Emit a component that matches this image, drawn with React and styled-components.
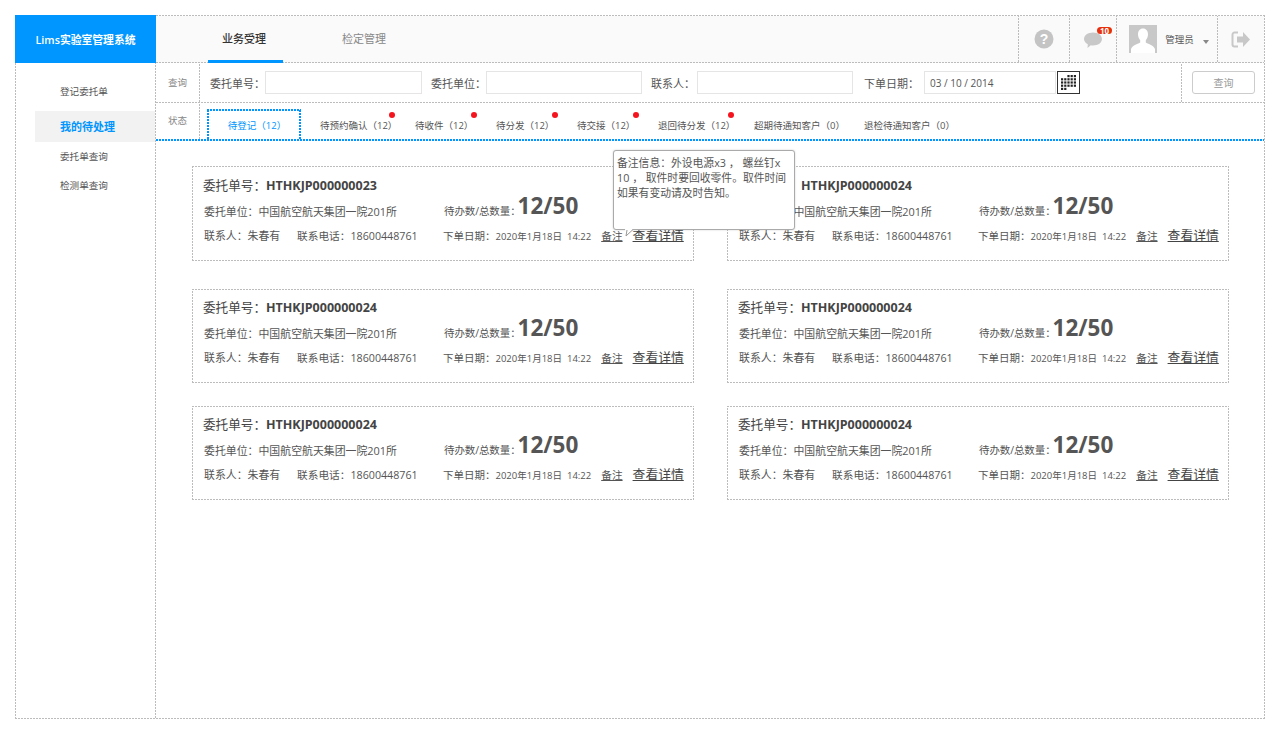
import React from "react";
import styled, { createGlobalStyle, css } from "styled-components";

const Global = createGlobalStyle`
  html, body { margin: 0; padding: 0; background: #fff; }
  * { box-sizing: border-box; }
  body { font-family: "Open Sans", "Noto Sans CJK SC", sans-serif; color: #555; }
`;
const GRAY = "#bcbcbc";
const BLUE = "#0096ff";

/* Fine 2-on 1-off dashes, finer than the browser's own dashed border. */
const dashes = (sides, color = GRAY, w = 1) => {
  const h = `repeating-linear-gradient(90deg, ${color} 0 2px, transparent 2px 3px)`;
  const v = `repeating-linear-gradient(0deg, ${color} 0 2px, transparent 2px 3px)`;
  const layers = {
    top: `${h} left top / 100% ${w}px no-repeat border-box`,
    bottom: `${h} left bottom / 100% ${w}px no-repeat border-box`,
    left: `${v} left top / ${w}px 100% no-repeat border-box`,
    right: `${v} right top / ${w}px 100% no-repeat border-box`,
  };
  return css`
    border: 0 solid transparent;
    ${sides.map(s => `border-${s}-width: ${w}px;`).join(" ")}
    background-image: none;
    background: ${sides.map(s => layers[s]).join(", ")};
  `;
};

const Frame = styled.div`
  position: relative;
  margin: 15px 0 0 15px;
  width: 1250px;
  height: 704px;
  ${dashes(["top", "right", "bottom", "left"])}
  display: grid;
  grid-template-columns: 140px 1fr;
  grid-template-rows: 47px 1fr;
`;
const Logo = styled.div`
  background: ${BLUE};
  color: #fff;
  font-size: 10.8px;
  font-weight: 600;
  display: flex;
  align-items: center;
  justify-content: center;
  margin: -1px 0 0 -1px;
  width: 141px;
  height: 48px;
`;
const Header = styled.header`
  ${dashes(["bottom"])}
  background-color: #fafafa;
  display: flex;
  align-items: stretch;
`;
const NavTab = styled.div`
  width: 75px;
  margin-left: ${p => p.$ml}px;
  font-size: 11px;
  color: ${p => (p.$active ? "#333" : "#888")};
  font-weight: ${p => (p.$active ? 500 : 400)};
  display: flex;
  align-items: center;
  justify-content: center;
  border-bottom: 3px solid ${p => (p.$active ? BLUE : "transparent")};
  margin-bottom: -1px;
  padding-right: 3px;
`;
const HeaderRight = styled.div`
  margin-left: auto;
  display: flex;
`;
const HeadCell = styled.div`
  position: relative;
  width: ${p => p.$w}px;
  ${dashes(["left"])}
  display: flex;
  align-items: center;
  justify-content: center;
  padding-left: ${p => p.$pl || 0}px;
`;
const Badge = styled.span`
  position: absolute;
  top: 11px;
  left: 27px;
  width: 15px;
  height: 7px;
  border-radius: 4px;
  background: #e8300c;
  color: #fff;
  font-size: 8px;
  font-weight: 700;
  line-height: 7px;
  text-align: center;
`;
const UserName = styled.span`
  font-size: 9.5px;
  color: #555;
  margin: 0 9px 0 8px;
`;
const Caret = styled.span`
  width: 0;
  height: 0;
  border-left: 3.5px solid transparent;
  border-right: 3.5px solid transparent;
  border-top: 4px solid #888;
  margin-top: 6px;
`;
const Sidebar = styled.nav`
  ${dashes(["right"])}
  padding-top: 18px;
  display: flex;
  flex-direction: column;
  align-items: flex-end;
`;
const SideItem = styled.div`
  width: 120px;
  height: ${p => p.$h}px;
  padding-left: 25px;
  padding-bottom: ${p => (p.$active ? 2 : 0)}px;
  font-size: ${p => (p.$active ? "11px" : "9.6px")};
  font-weight: ${p => (p.$active ? 700 : 400)};
  color: ${p => (p.$active ? BLUE : "#555")};
  background: ${p => (p.$active ? "#f2f2f2" : "transparent")};
  display: flex;
  align-items: center;
  margin-top: ${p => p.$mt || 0}px;
`;
const Main = styled.main`
  position: relative;
  display: flex;
  flex-direction: column;
`;
const QueryRow = styled.div`
  height: 40px;
  ${dashes(["bottom"])}
  display: flex;
  align-items: stretch;
`;
const RowLabel = styled.div`
  width: 44px;
  flex: none;
  ${dashes(["right"])}
  font-size: 9.5px;
  color: #888;
  display: flex;
  align-items: center;
  justify-content: center;
  padding-bottom: ${p => p.$pb || 0}px;
`;
const Fields = styled.div`
  flex: 1;
  display: flex;
  align-items: center;
  padding-left: 10px;
`;
const FieldLabel = styled.span`
  font-size: 11px;
  color: #555;
  width: ${p => p.$w}px;
  flex: none;
  white-space: nowrap;
`;
const Input = styled.div`
  width: ${p => p.$w}px;
  height: 23px;
  flex: none;
  border: 1px solid #e5e5e5;
  background: #fff;
  margin-right: ${p => p.$mr || 0}px;
  font-size: 10px;
  color: #555;
  padding-left: 5px;
  display: flex;
  align-items: center;
`;
const Calendar = styled.div`
  width: 23px;
  height: 23px;
  flex: none;
  border: 1px solid #333;
  margin-left: 1px;
  display: flex;
  align-items: center;
  justify-content: center;
  background: #fff;
`;
const QueryCell = styled.div`
  width: 83px;
  flex: none;
  ${dashes(["left"])}
  display: flex;
  align-items: center;
  padding-left: 10px;
`;
const QueryBtn = styled.div`
  width: 63px;
  height: 23px;
  border: 1px solid #ccc;
  border-radius: 3px;
  font-size: 10px;
  color: #999;
  display: flex;
  align-items: center;
  justify-content: center;
`;
const StatusRow = styled.div`
  height: 38px;
  ${dashes(["bottom"], BLUE, 2)}
  display: flex;
  align-items: stretch;
`;
const Tabs = styled.div`
  flex: 1;
  display: flex;
  padding-left: 7px;
`;
const Tab = styled.div`
  position: relative;
  width: ${p => p.$w}px;
  flex: none;
  margin-top: 6px;
  font-size: 9.5px;
  white-space: nowrap;
  color: ${p => (p.$active ? BLUE : "#555")};
  ${p => (p.$active ? dashes(["top", "left", "right"], BLUE, 2) : "border: 1px solid transparent; border-bottom: 0;")}
  display: flex;
  align-items: center;
  justify-content: ${p => (p.$active ? "center" : "flex-start")};
  padding-left: ${p => (p.$active ? 6 : p.$pl || 0)}px;
`;
const Dot = styled.i`
  position: absolute;
  top: 2px;
  left: ${p => p.$l}px;
  width: 6px;
  height: 6px;
  border-radius: 50%;
  background: #f5141e;
`;
const Cards = styled.section`
  padding: 25px 0 0 36px;
  display: grid;
  grid-template-columns: 502px 502px;
  grid-template-rows: 100px 94px 94px;
  column-gap: 33px;
  row-gap: 23px;
`;
const Card = styled.article`
  height: ${p => (p.$first ? 95 : 94)}px;
  ${dashes(["top", "right", "bottom", "left"])}
  padding: ${p => (p.$first ? 10 : 9)}px 9px 0 10px;
  display: flex;
  flex-direction: column;
`;
const Title = styled.div`
  font-size: 12.6px;
  color: #444;
  height: 18px;
  line-height: 18px;
  white-space: nowrap;
  b { font-size: 12.5px; font-weight: 700; color: #444; }
`;
const Line = styled.div`
  display: flex;
  align-items: center;
  font-size: 10.7px;
  color: #555;
  white-space: nowrap;
  padding-left: ${p => p.$pl || 0}px;
`;
const StatLine = styled(Line)`
  height: 30px;
`;
const InfoLine = styled(Line)`
  height: 18px;
  margin-top: 1px;
`;
const CellW = styled.span`
  width: ${p => p.$w}px;
  flex: none;
  display: flex;
  align-items: center;
  padding-top: ${p => p.$pt || 0}px;
`;
const Contact = styled(CellW)`
  font-size: 10.9px;
`;
const Unit = styled(CellW)`
  font-size: 10.9px;
`;
const StatLabel = styled.span`
  font-size: 10.5px;
  letter-spacing: -0.1px;
`;
const Big = styled.strong`
  font-size: 22.5px;
  font-weight: 700;
  color: #555;
  margin-left: -3px;
  position: relative;
  top: -4px;
  line-height: 1;
`;
const Small = styled.span`
  font-size: 9.5px;
`;
const OrderDate = styled.span`
  font-size: 10.5px;
`;
const Note = styled.span`
  text-decoration: underline;
  margin-left: 10px;
`;
const More = styled.span`
  font-size: 12.8px;
  text-decoration: underline;
  color: #444;
  margin-left: 10px;
  position: relative;
  top: -1px;
`;
const Tooltip = styled.div`
  position: absolute;
  left: 457px;
  top: 87px;
  width: 182px;
  height: 80px;
  background: #fff;
  border: 1px solid #aaa;
  border-radius: 3px;
  box-shadow: 0 0 2px rgba(0,0,0,.2);
  padding: 4px 3px;
  font-size: 10.8px;
  line-height: 15px;
  color: #555;
  z-index: 5;
  white-space: nowrap;
`;
const Tail = styled.svg`
  position: absolute;
  left: 11px;
  top: 78px;
`;

const HelpIcon = () => (
  <svg width="20" height="20" viewBox="0 0 20 20" aria-hidden>
    <circle cx="10" cy="10" r="9.5" fill="#c4c4c4" />
    <text x="10" y="15" textAnchor="middle" fontSize="14" fontWeight="700" fill="#fff" fontFamily="Liberation Sans">?</text>
  </svg>
);
const ChatIcon = () => (
  <svg width="20" height="18" viewBox="0 0 20 18" aria-hidden style={{ marginTop: 2 }}>
    <path d="M10 1.5c5 0 9 2.8 9 6.500s-4 6.500-9 6.500c-.8 0-1.400 0-2.200-.2L4.500 17l.3-3.800C2.500 12 1 10.200 1 8c0-3.700 4-6.500 9-6.500z" fill="#c8c8c8" />
  </svg>
);
const Avatar = () => (
  <svg width="28" height="28" viewBox="0 0 28 28" aria-hidden>
    <rect width="28" height="28" fill="#c8c8c8" />
    <path d="M14 3.500c3.200 0 5 2.500 5 5.800 0 2.500-1 4.700-2.200 6v2.200c1.500 1.300 8 2.500 9.200 6.500v4H2v-4c1.200-4 7.700-5.200 9.200-6.500v-2.200C10 14 9 11.800 9 9.300c0-3.300 1.800-5.800 5-5.800z" fill="#fff" />
  </svg>
);
const LogoutIcon = () => (
  <svg width="20" height="17" viewBox="0 0 20 17" aria-hidden>
    <path d="M7 1.500H3.500a2 2 0 0 0-2 2v10a2 2 0 0 0 2 2H7" fill="none" stroke="#c8c8c8" strokeWidth="2" />
    <path d="M6 5.500h6V1l7 7.500-7 7.500v-4.500H6z" fill="#c8c8c8" />
  </svg>
);
const CalendarIcon = () => {
  const cells = [];
  for (let r = 0; r < 5; r++) {
    for (let c = 0; c < 5; c++) {
      if (r === 0 && c < 2) continue;
      if (r === 4 && c > 1) continue;
      cells.push(<rect key={`${r}-${c}`} x={c * 3.2} y={r * 3.2} width="2.200" height="2.200" fill="#222" />);
    }
  }
  return <svg width="15" height="15" viewBox="0 0 15 15" aria-hidden>{cells}</svg>;
};

const tabs = [
  { label: "待预约确认（12）", w: 95, pl: 18, dot: 87 },
  { label: "待收件（12）", w: 81, pl: 18, dot: 74 },
  { label: "待分发（12）", w: 81, pl: 18, dot: 74 },
  { label: "待交接（12）", w: 81, pl: 18, dot: 74 },
  { label: "退回待分发（12）", w: 96, pl: 18, dot: 88 },
  { label: "超期待通知客户（0）", w: 110, pl: 18 },
  { label: "退检待通知客户（0）", w: 110, pl: 18 },
];

const cards = [
  { no: "HTHKJP000000023", first: true },
  { no: "HTHKJP000000024", first: true },
  { no: "HTHKJP000000024" },
  { no: "HTHKJP000000024" },
  { no: "HTHKJP000000024" },
  { no: "HTHKJP000000024" },
];

export default function App() {
  return (
    <>
      <Global />
      <Frame>
        <Logo>Lims实验室管理系统</Logo>
        <Header>
          <NavTab $active $ml={52}>业务受理</NavTab>
          <NavTab $ml={45}>检定管理</NavTab>
          <HeaderRight>
            <HeadCell $w={51}><HelpIcon /></HeadCell>
            <HeadCell $w={47}><ChatIcon /><Badge>10</Badge></HeadCell>
            <HeadCell $w={101} $pl={4}><Avatar /><UserName>管理员</UserName><Caret /></HeadCell>
            <HeadCell $w={47}><LogoutIcon /></HeadCell>
          </HeaderRight>
        </Header>
        <Sidebar>
          <SideItem $h={20}>登记委托单</SideItem>
          <SideItem $active $h={31} $mt={10}>我的待处理</SideItem>
          <SideItem $h={20} $mt={4}>委托单查询</SideItem>
          <SideItem $h={20} $mt={9}>检测单查询</SideItem>
        </Sidebar>
        <Main>
          <QueryRow>
            <RowLabel $pb={2}>查询</RowLabel>
            <Fields>
              <FieldLabel $w={55}>委托单号：</FieldLabel>
              <Input $w={157} $mr={9} />
              <FieldLabel $w={55}>委托单位：</FieldLabel>
              <Input $w={156} $mr={9} />
              <FieldLabel $w={46}>联系人：</FieldLabel>
              <Input $w={156} $mr={11} />
              <FieldLabel $w={60}>下单日期：</FieldLabel>
              <Input $w={132}>03 / 10 / 2014</Input>
              <Calendar><CalendarIcon /></Calendar>
            </Fields>
            <QueryCell><QueryBtn>查询</QueryBtn></QueryCell>
          </QueryRow>
          <StatusRow>
            <RowLabel $pb={3}>状态</RowLabel>
            <Tabs>
              <Tab $active $w={94}>待登记（12）</Tab>
              {tabs.map(t => (
                <Tab key={t.label} $w={t.w} $pl={t.pl}>
                  {t.label}
                  {t.dot && <Dot $l={t.dot} />}
                </Tab>
              ))}
            </Tabs>
          </StatusRow>
          <Cards>
            {cards.map((c, i) => (
              <Card key={i} $first={c.first}>
                <Title>委托单号：<b>{c.no}</b></Title>
                <StatLine $pl={1}>
                  <Unit $w={240} $pt={2}>委托单位：中国航空航天集团一院201所</Unit>
                  <StatLabel>待办数/总数量：</StatLabel><Big>12/50</Big>
                </StatLine>
                <InfoLine $pl={1}>
                  <Contact $w={93}>联系人：朱春有</Contact>
                  <CellW $w={146}>联系电话：18600448761</CellW>
                  <OrderDate>下单日期：<Small>2020年1月18日&nbsp;&nbsp;14:22</Small></OrderDate>
                  <Note>备注</Note>
                  <More>查看详情</More>
                </InfoLine>
              </Card>
            ))}
          </Cards>
          <Tooltip>
            备注信息：外设电源x3 ， 螺丝钉x<br />
            10 ， 取件时要回收零件。取件时间<br />
            如果有变动请及时告知。
            <Tail width="12" height="9" viewBox="0 0 12 9" aria-hidden>
              <path d="M0 0 L8 0 L1 7 Z" fill="#fff" />
              <path d="M8 0.500 L1 7 L2 1" fill="none" stroke="#999" />
            </Tail>
          </Tooltip>
        </Main>
      </Frame>
    </>
  );
}
